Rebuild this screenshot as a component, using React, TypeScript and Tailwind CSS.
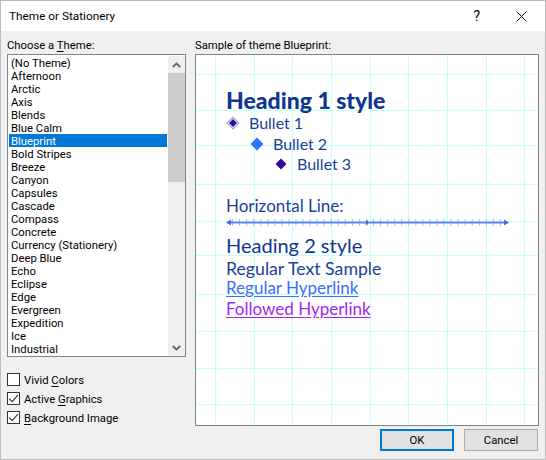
const themes = [
  '(No Theme)', 'Afternoon', 'Arctic', 'Axis', 'Blends', 'Blue Calm', 'Blueprint', 'Bold Stripes',
  'Breeze', 'Canyon', 'Capsules', 'Cascade', 'Compass', 'Concrete', 'Currency (Stationery)', 'Deep Blue',
  'Echo', 'Eclipse', 'Edge', 'Evergreen', 'Expedition', 'Ice', 'Industrial',
];

const gridX = [19, 58, 96, 135, 174, 212, 251, 290, 328];
const gridY = [19, 55, 90, 129, 166, 200, 239, 276, 313, 349];
const ticks = Array.from({ length: 39 }, (_, i) => 6 + i * 7.05);

function Grid() {
  return (
    <svg className="absolute inset-0" width="342" height="370">
      {gridX.map((x) => (
        <rect key={x} x={x} y="0" width="1" height="370" fill="#c4ffff" />
      ))}
      {gridY.map((y) => (
        <rect key={y} x="0" y={y} width="342" height="1" fill="#c4ffff" />
      ))}
    </svg>
  );
}

function Diamond({ kind }: { kind: 1 | 2 | 3 }) {
  return (
    <svg width="14" height="14" viewBox="0 0 14 14" className="shrink-0">
      {kind === 1 && (
        <>
          <path d="M7 .4 13.6 7 7 13.6.4 7Z" fill="#a08fe0" />
          <path d="M7 1.9 12.1 7 7 12.1 1.9 7Z" fill="#fff" />
          <path d="M7 3 11 7 7 11 3 7Z" fill="#330b9a" />
        </>
      )}
      {kind === 2 && <path d="M7 .6 13.4 7 7 13.4.6 7Z" fill="#3370ff" />}
      {kind === 3 && <path d="M7 1.5 12.5 7 7 12.5 1.5 7Z" fill="#330b9a" />}
    </svg>
  );
}

function Check({ checked, mnemonic, rest, before }: { checked: boolean; mnemonic: string; rest: string; before?: string }) {
  return (
    <div className="flex h-[19px] items-center gap-[4px]">
      <div className="flex h-[13px] w-[13px] items-center justify-center border border-[#333] bg-white">
        {checked && (
          <svg width="11" height="11" viewBox="0 0 11 11">
            <path d="M1.2 5.6 4.2 8.6 9.8 2.2" fill="none" stroke="#333" strokeWidth="1.1" />
          </svg>
        )}
      </div>
      <span className="mt-[4px]">
        {before}
        <span className="underline underline-offset-2">{mnemonic}</span>
        {rest}
      </span>
    </div>
  );
}

function Button({ children, primary }: { children: React.ReactNode; primary?: boolean }) {
  return (
    <button
      className={
        primary
          ? 'h-[22px] w-[74px] border-2 border-[#0078d7] bg-[#e1e1e1] pt-[1px] leading-none'
          : 'h-[22px] w-[74px] border border-[#adadad] bg-[#e1e1e1] pt-[1px] leading-none'
      }
    >
      {children}
    </button>
  );
}

export default function App() {
  return (
    <div className="flex h-[460px] w-[546px] flex-col border border-[#bdbdbd] bg-[#f0f0f0] font-['Roboto',sans-serif] text-[11.3px] text-black">
      <div className="flex h-[30px] shrink-0 items-center bg-white pl-[8px]">
        <span className="flex-1 pt-[2px] text-[11.8px]">Theme or Stationery</span>
        <span className="mr-[36px] text-[14px] leading-none">?</span>
        <svg width="11" height="11" viewBox="0 0 11 11" className="mr-[18px]">
          <path d="M.5.5 10.5 10.5M10.5.5.5 10.5" stroke="#111" strokeWidth="1" fill="none" />
        </svg>
      </div>

      <div className="flex flex-1 pl-[6px] pt-[7px]">
        <div className="w-[179px]">
          <div className="h-[16px] leading-[15px]">
            Choose a <span className="underline underline-offset-2">T</span>heme:
          </div>
          <div className="flex h-[303px] border border-[#82828a] bg-white pl-[1px] pt-[1px]">
            <ul className="w-[158px]">
              {themes.map((t) => (
                <li
                  key={t}
                  className={
                    t === 'Blueprint'
                      ? 'h-[13px] bg-[#0078d7] pl-[2px] leading-[15px] text-white'
                      : 'h-[13px] pl-[2px] leading-[15px]'
                  }
                >
                  {t}
                </li>
              ))}
            </ul>
            <div className="ml-[1px] flex h-full w-[17px] flex-col bg-[#f0f0f0]">
              <div className="flex h-[17px] items-center justify-center">
                <svg width="9" height="6" viewBox="0 0 9 6">
                  <path d="M.8 5 4.5 1.4 8.2 5" fill="none" stroke="#606060" strokeWidth="1.8" />
                </svg>
              </div>
              <div className="h-[109px] bg-[#cdcdcd]" />
              <div className="flex-1" />
              <div className="flex h-[17px] items-center justify-center">
                <svg width="9" height="6" viewBox="0 0 9 6">
                  <path d="M.8 1 4.5 4.6 8.2 1" fill="none" stroke="#606060" strokeWidth="1.8" />
                </svg>
              </div>
            </div>
          </div>
          <div className="mt-[13px]">
            <Check checked={false} before="Vivid " mnemonic="C" rest="olors" />
            <Check checked before="Active " mnemonic="G" rest="raphics" />
            <Check checked mnemonic="B" rest="ackground Image" />
          </div>
        </div>

        <div className="ml-[9px] flex w-[344px] flex-col">
          <div className="h-[16px] leading-[15px]">Sample of theme Blueprint:</div>
          <div className="relative h-[372px] border border-[#82828a] bg-white pl-[30px] pt-[32px] font-['Lato',sans-serif] text-[#1d3f9a]">
            <Grid />
            <div className="relative">
              <div className="h-[26px] text-[23px] font-black leading-[26px] text-[#0f3690]">Heading 1 style</div>
              <div className="flex h-[20px] items-center gap-[9px] text-[16px]">
                <Diamond kind={1} />
                Bullet 1
              </div>
              <div className="mt-[1px] flex h-[20px] items-center gap-[9px] pl-[24px] text-[16px]">
                <Diamond kind={2} />
                Bullet 2
              </div>
              <div className="flex h-[20px] items-center gap-[9px] pl-[48px] text-[16px]">
                <Diamond kind={3} />
                Bullet 3
              </div>
              <div className="mt-[22px] h-[20px] text-[17px] leading-[20px]">Horizontal Line:</div>
              <svg width="284" height="9" viewBox="0 0 284 9" className="mt-[2px] block">
                {ticks.map((x) => (
                  <rect key={x} x={x} y="1" width="1" height="7" fill="#a9bff5" />
                ))}
                <rect x="4" y="3.5" width="276" height="2" fill="#5f86ea" />
                <path d="M0 4.5 5 1.5V7.5Z" fill="#3f6be0" />
                <path d="M283 4.5 278 1.5V7.5Z" fill="#3f6be0" />
                <rect x="140" y="2.5" width="2" height="4" fill="#3f6be0" />
              </svg>
              <div className="mt-[6px] h-[24px] text-[20px] leading-[24px] text-[#0f3690]">Heading 2 style</div>
              <div className="mt-[2px] h-[19px] text-[17.7px] leading-[20px]">Regular Text Sample</div>
              <div className="h-[20px] text-[17px] leading-[20px] text-[#3b6cff] underline underline-offset-2">Regular Hyperlink</div>
              <div className="mt-[1px] h-[20px] text-[17px] leading-[20px] text-[#a326f5] underline underline-offset-2">Followed Hyperlink</div>
            </div>
          </div>
          <div className="mt-[3px] flex gap-[10px] pl-[185px]">
            <Button primary>OK</Button>
            <Button>Cancel</Button>
          </div>
        </div>
      </div>
    </div>
  );
}
